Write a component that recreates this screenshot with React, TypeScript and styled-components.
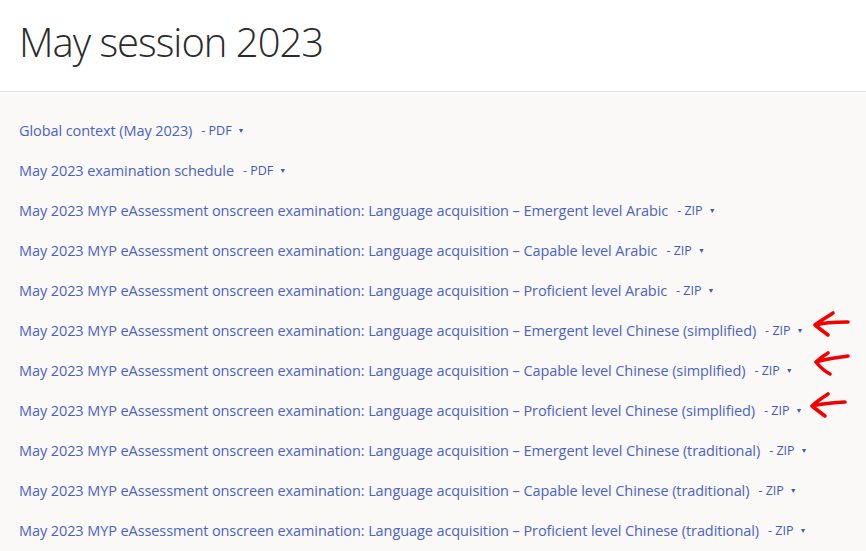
import React from 'react';
import styled, {createGlobalStyle} from "styled-components";

type ItemType = {
    title: string
    format: string
    marked?: 1 | 2 | 3
}

const items: Array<ItemType> = [
    {title: 'Global context (May 2023)', format: 'PDF'},
    {title: 'May 2023 examination schedule', format: 'PDF'},
    {title: 'May 2023 MYP eAssessment onscreen examination: Language acquisition – Emergent level Arabic', format: 'ZIP'},
    {title: 'May 2023 MYP eAssessment onscreen examination: Language acquisition – Capable level Arabic', format: 'ZIP'},
    {title: 'May 2023 MYP eAssessment onscreen examination: Language acquisition – Proficient level Arabic', format: 'ZIP'},
    {title: 'May 2023 MYP eAssessment onscreen examination: Language acquisition – Emergent level Chinese (simplified)', format: 'ZIP', marked: 1},
    {title: 'May 2023 MYP eAssessment onscreen examination: Language acquisition – Capable level Chinese (simplified)', format: 'ZIP', marked: 2},
    {title: 'May 2023 MYP eAssessment onscreen examination: Language acquisition – Proficient level Chinese (simplified)', format: 'ZIP', marked: 3},
    {title: 'May 2023 MYP eAssessment onscreen examination: Language acquisition – Emergent level Chinese (traditional)', format: 'ZIP'},
    {title: 'May 2023 MYP eAssessment onscreen examination: Language acquisition – Capable level Chinese (traditional)', format: 'ZIP'},
    {title: 'May 2023 MYP eAssessment onscreen examination: Language acquisition – Proficient level Chinese (traditional)', format: 'ZIP'},
]

// hand drawn red arrows, one shape per marked row
const arrowPaths: Record<number, string> = {
    1: 'M33 4 C27 8 20 12 15 16 C20 20 24 23 28 26 M15 16 C22 14 30 13 48 13',
    2: 'M28 4 C23 7 19 10 16 13 C20 18 24 22 30 25 M16 13 C24 10 34 9 48 7',
    3: 'M28 5 C22 9 17 12 12 17 C17 21 21 24 25 27 M12 17 C20 15 30 14 45 13',
}

const Arrow = ({variant}: {variant: number}) => (
    <StyledArrow width="52" height="32" viewBox="0 0 52 32">
        <path d={arrowPaths[variant]} fill="none" stroke="#f20000" strokeWidth="3.6"
              strokeLinecap="round" strokeLinejoin="round"/>
    </StyledArrow>
)

const App = () => {
    return (
        <>
            <GlobalStyle/>
            <Page>
                <Header>
                    <Title>May session 2023</Title>
                </Header>
                <List>
                    {items.map((item, index) => (
                        <Row key={index}>
                            <Link>{item.title}</Link>
                            <Format>- {item.format}<Caret>▼</Caret></Format>
                            {item.marked && <Arrow variant={item.marked}/>}
                        </Row>
                    ))}
                </List>
            </Page>
        </>
    );
};

export default App;

const GlobalStyle = createGlobalStyle`
    body {
        margin: 0;
        background: #faf9f8;
        font-family: "Open Sans", "Noto Sans", sans-serif;
    }
`

const Page = styled.div`
    width: 866px;
    height: 551px;
    overflow: hidden;
    background: #faf9f8;
`

const Header = styled.header`
    height: 92px;
    background: #ffffff;
    border-bottom: 1px solid #e2e2e2;
    display: flex;
    align-items: center;
    padding-left: 19px;
    box-sizing: border-box;
`

const Title = styled.h1`
    margin: 0 0 8px;
    font-family: "Open Sans", sans-serif;
    font-weight: 300;
    font-size: 40px;
    letter-spacing: -1px;
    color: #2b2b2b;
`

const List = styled.ul`
    list-style: none;
    margin: 0;
    padding: 18px 0 0 19px;
`

const Row = styled.li`
    position: relative;
    display: flex;
    align-items: center;
    height: 40px;
`

const Link = styled.a`
    font-size: 14.5px;
    letter-spacing: -0.09px;
    color: #4c62c4;
    cursor: pointer;
`

const Format = styled.span`
    margin-left: 9px;
    font-size: 12.5px;
    color: #3f58bf;
    display: flex;
    align-items: center;
`

const Caret = styled.span`
    margin-left: 6px;
    font-size: 7px;
`

const StyledArrow = styled.svg`
    position: absolute;
    left: 781px;
    top: -1px;
`
